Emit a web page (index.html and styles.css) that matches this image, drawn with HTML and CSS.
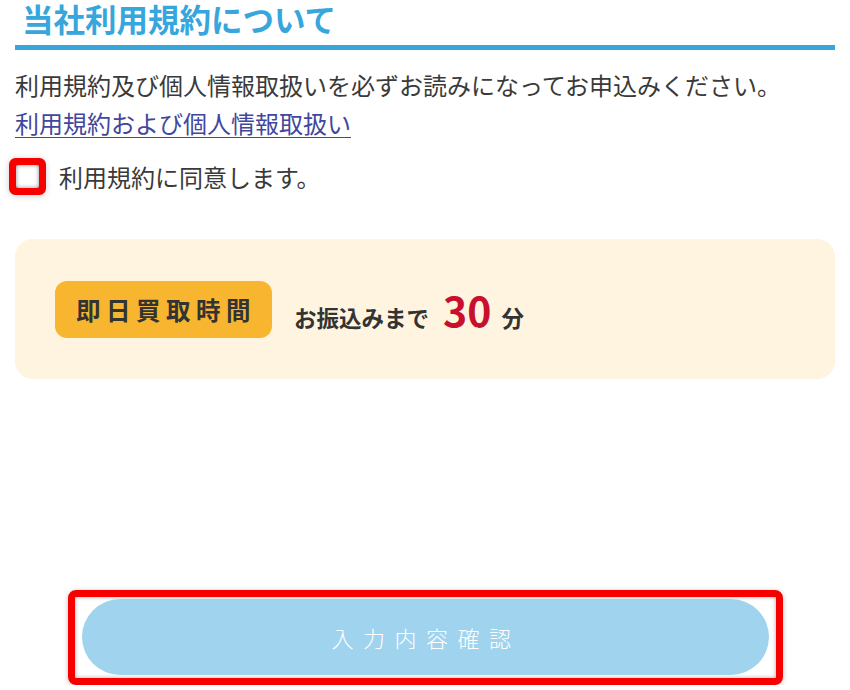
FILE: index.html
```html
<!DOCTYPE html>
<html lang="ja">
<head>
  <meta charset="UTF-8">
  <title>当社利用規約について</title>
  <link rel="stylesheet" href="styles.css">
</head>
<body>

  <div class="wrap">
    <h2 class="section-title">当社利用規約について</h2>

    <p class="terms-text">
      利用規約及び個人情報取扱いを必ずお読みになってお申込みください。<br>
      <a href="#" class="terms-link">利用規約および個人情報取扱い</a>
    </p>

    <label class="agree">
      <span class="check"></span>
      <span>利用規約に同意します。</span>
    </label>

    <div class="sameday">
      <span class="badge">即日買取時間</span>
      <span class="until">お振込みまで<span class="minutes">30</span>分</span>
    </div>

    <div class="submit-frame">
      <button class="submit" type="button" disabled>入力内容確認</button>
    </div>
  </div>

</body>
</html>
```

FILE: styles.css
```css
body {
  margin: 0;
  background: #fff;
  font-family: "Noto Sans CJK JP", sans-serif;
  color: #3a3a3a;
}

.wrap {
  padding: 0 15px;
}

.section-title {
  margin: 0;
  padding: 2px 0 11px 7px;
  font-size: 31.5px;
  line-height: 32px;
  font-weight: bold;
  color: #37a6dc;
  border-bottom: 5px solid #37a6dc;
}

.terms-text {
  margin: 16px 0 0;
  font-size: 24px;
  line-height: 38px;
}

.terms-link {
  color: #42479d;
  text-decoration: underline;
  text-underline-offset: 4px;
  text-decoration-thickness: 1px;
}

.agree {
  display: flex;
  align-items: center;
  margin-top: 16px;
  height: 37px;
  font-size: 24px;
}

.check {
  width: 23px;
  height: 23px;
  margin-left: 1px;
  margin-right: 20px;
  border-radius: 2px;
  background: #fff;
  box-shadow: inset 0 0 4px rgba(0, 0, 0, 0.45), 0 0 0 7px #f60000, 0 1px 6px 7px rgba(0, 0, 0, 0.2);
}

.sameday {
  display: flex;
  align-items: center;
  height: 140px;
  margin-top: 44px;
  padding: 0 40px;
  background: #fef4df;
  border-radius: 18px;
}

.badge {
  display: flex;
  align-items: center;
  height: 57px;
  padding: 0 16px 0 21px;
  background: #f8b630;
  border-radius: 12px;
  font-size: 24.5px;
  font-weight: bold;
  letter-spacing: 5.5px;
  color: #333;
}

.until {
  margin-left: 22px;
  font-size: 22.5px;
  font-weight: bold;
  color: #333;
}

.minutes {
  margin: 0 10px 0 14px;
  font-size: 41px;
  color: #c8102e;
}

.submit-frame {
  width: 701px;
  margin: 211px auto 0;
  padding: 2px 0 3px;
  border: 7px solid #f60000;
  border-radius: 8px;
  box-shadow: inset 0 0 4px rgba(0, 0, 0, 0.35), 0 1px 5px rgba(0, 0, 0, 0.25);
}

.submit {
  display: block;
  width: 687px;
  height: 76px;
  margin: 0 auto;
  border: none;
  border-radius: 38px;
  background: #9fd3ee;
  color: #fff;
  font-family: "Noto Sans CJK JP", sans-serif;
  font-size: 22px;
  font-weight: 300;
  letter-spacing: 9.5px;
  padding-left: 8px;
}
```
